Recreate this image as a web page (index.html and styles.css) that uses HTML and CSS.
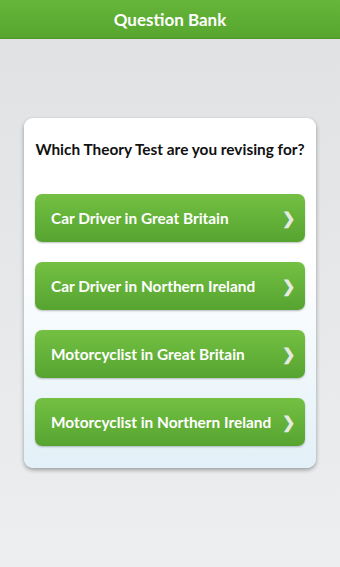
FILE: index.html
```html
<!DOCTYPE html>
<html lang="en">

<head>
    <meta charset="UTF-8">
    <meta name="viewport" content="width=device-width, initial-scale=1.0">
    <title>Question Bank</title>
    <link rel="stylesheet" href="styles.css">
</head>

<body>
    <div class="header">
        <h1>Question Bank</h1>
    </div>
    <div class="container">
        <div class="box">
            <h2>Which Theory Test are you revising for?</h2>
            <div class="list">
                <a class="option" href="#">Car Driver in Great Britain <span class="arrow">&#x276F;</span></a>
                <a class="option" href="#">Car Driver in Northern Ireland <span class="arrow">&#x276F;</span></a>
                <a class="option" href="#">Motorcyclist in Great Britain <span class="arrow">&#x276F;</span></a>
                <a class="option" href="#">Motorcyclist in Northern Ireland <span class="arrow">&#x276F;</span></a>
            </div>
        </div>
    </div>
</body>

</html>
```

FILE: styles.css
```css
* {
    margin: 0;
    padding: 0;
    box-sizing: border-box;
}

body {
    width: 340px;
    height: 567px;
    overflow: hidden;
    font-family: Lato, "Open Sans", sans-serif;
    background: linear-gradient(180deg, #dfe1e3, #eceef0);
}

.header {
    height: 39px;
    background: linear-gradient(180deg, #66b63a, #57a52e);
    border-bottom: 1px solid #4e9a28;
    display: flex;
    justify-content: center;
    align-items: center;
}

.header h1 {
    color: #fff;
    font-size: 17px;
    font-weight: 700;
}

.container {
    padding: 79px 24px 0;
}

.box {
    background: linear-gradient(180deg, #ffffff 40%, #e2f0f7);
    border-radius: 9px;
    box-shadow: 0 2px 4px rgba(0, 0, 0, 0.35);
    padding: 22px 11px 22px;
}

.box h2 {
    font-size: 15.4px;
    font-weight: 700;
    color: #111;
    text-align: center;
    margin-bottom: 36px;
}

.list {
    display: flex;
    flex-direction: column;
    gap: 20px;
}

.option {
    height: 48px;
    display: flex;
    align-items: center;
    justify-content: space-between;
    padding: 0 10px 0 16px;
    border-radius: 7px;
    background: linear-gradient(180deg, #74c043, #56a430);
    box-shadow: 0 1px 2px rgba(0, 0, 0, 0.25);
    color: #fff;
    text-decoration: none;
    font-size: 15.4px;
    font-weight: 700;
}

.arrow {
    color: #e6eae4;
    font-size: 16px;
}
```
